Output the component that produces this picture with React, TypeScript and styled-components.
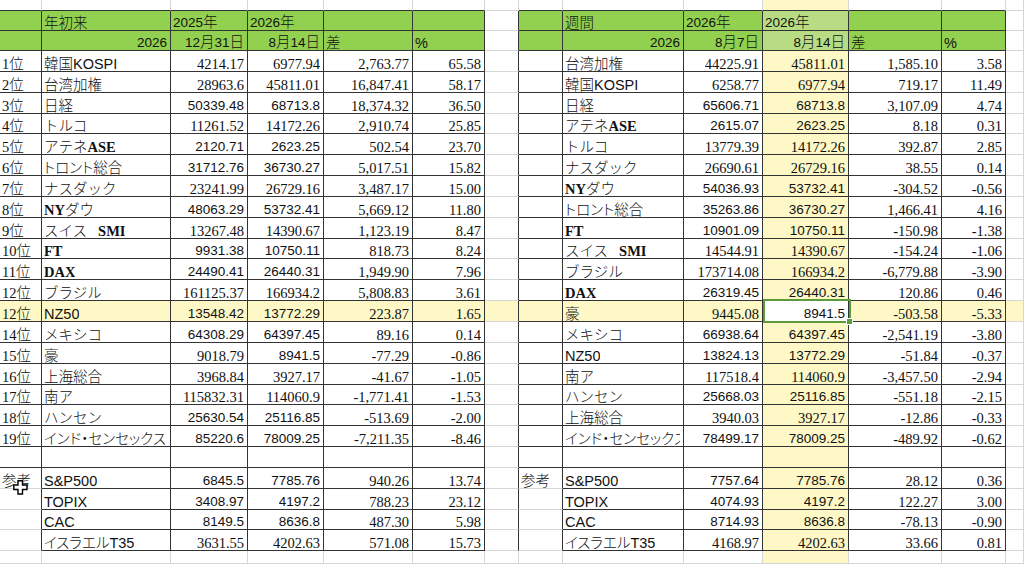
import React from "react";
import styled, { createGlobalStyle } from "styled-components";

const GlobalStyle = createGlobalStyle`
  html, body {
    margin: 0;
    padding: 0;
    background: #fff;
  }
  body {
    overflow: hidden;
  }
`;

const SANS = `"Liberation Sans", "Noto Sans CJK JP", sans-serif`;
const SERIF = `"Liberation Serif", "Noto Sans CJK JP", serif`;

const GREEN = "#92d050";
const GREEN_LIT = "#b8dc84";
const YELLOW = "#fdf8c6";
const GRID = "#d6d6d6";
const LINE = "#333";
const SELECT = "#5b9b3b";

const COLS = 14;
const HIGHLIGHT = 12;

type Kind = "top" | "h1" | "h2" | "data" | "blank" | "ref" | "bottom";
type Align = "left" | "right";
type Spec = { node: React.ReactNode; align?: Align } | null;
type Font = "r" | "s";

const Sheet = styled.div`
  display: grid;
  grid-template-columns: 42px 129px 77px 76px 89px 72px 34px 44px 121px 79px 86px 93px 64px 1fr;
  grid-template-rows: 11px 20px 20px repeat(24, 20.85px) 1fr;
  width: 1024px;
  height: 564px;
  overflow: hidden;
  color: #111;
`;

const Cell = styled.div<{ $bg: string; $right: string; $bottom: string; $align: Align }>`
  position: relative;
  display: flex;
  align-items: flex-end;
  justify-content: ${(p) => (p.$align === "right" ? "flex-end" : "flex-start")};
  min-width: 0;
  padding: 0 3px 0 2px;
  background: ${(p) => p.$bg};
  border-right: 1px solid ${(p) => p.$right};
  border-bottom: 1px solid ${(p) => p.$bottom};
  font-family: ${SANS};
  font-size: 14.5px;
  font-weight: 300;
  line-height: 14px;
`;

const Content = styled.span`
  min-width: 0;
  white-space: nowrap;
  overflow-x: clip;
`;

const Tight = styled.span`
  font-feature-settings: "palt";
`;

const Latin = styled.span<{ $gap?: boolean }>`
  font-family: ${SERIF};
  font-weight: 700;
  font-size: 14.5px;
  margin-left: ${(p) => (p.$gap ? "11px" : "0")};
`;

const Digit = styled.span`
  font-family: ${SERIF};
  font-weight: 400;
  font-size: 14.5px;
`;

const Figure = styled.span<{ $sans?: boolean }>`
  font-family: ${(p) => (p.$sans ? SANS : SERIF)};
  font-weight: 400;
  font-size: ${(p) => (p.$sans ? "13.5px" : "14.5px")};
`;

const HeadNum = styled.span`
  font-size: 13.5px;
`;

const Selection = styled.div`
  position: absolute;
  left: 0;
  top: -2px;
  right: -3px;
  bottom: -2px;
  border: 2px solid ${SELECT};
  z-index: 3;
  pointer-events: none;
`;

const Handle = styled.div`
  position: absolute;
  right: -4px;
  bottom: -4px;
  width: 5px;
  height: 5px;
  background: ${SELECT};
  border: 1px solid #fff;
`;

const Pointer = styled.svg`
  position: absolute;
  left: 13px;
  top: 12px;
  z-index: 4;
`;

const inTable = (c: number) => c <= 5 || (c >= 7 && c <= 12);

const rightLine = (kind: Kind, c: number) => {
  if (kind === "top" || kind === "bottom") return GRID;
  return c <= 12 ? LINE : GRID;
};

const bottomLine = (kind: Kind, c: number) => {
  if (kind === "bottom") return GRID;
  if (kind === "ref" && (c === 0 || c === 7)) return GRID;
  return inTable(c) ? LINE : GRID;
};

const background = (kind: Kind, c: number, index?: number) => {
  if (kind === "h1" || kind === "h2") {
    if (c === 10) return GREEN_LIT;
    return inTable(c) ? GREEN : "#fff";
  }
  if (kind === "data" && index === HIGHLIGHT) return c === 10 ? "#fff" : YELLOW;
  return c === 10 ? YELLOW : "#fff";
};

const Rank = ({ n }: { n: number | string }) => (
  <>
    <Digit>{n}</Digit>位
  </>
);

const Year = ({ y }: { y: string }) => (
  <>
    <HeadNum>{y}</HeadNum>年
  </>
);

const Day = ({ m, d }: { m: string; d: string }) => (
  <>
    <HeadNum>{m}</HeadNum>月<HeadNum>{d}</HeadNum>日
  </>
);

const names: Record<string, React.ReactNode> = {
  kospi: "韓国KOSPI",
  taiwan: "台湾加権",
  nikkei: "日経",
  turkey: "トルコ",
  athens: (
    <>
      アテネ<Latin>ASE</Latin>
    </>
  ),
  toronto: <Tight>トロント総合</Tight>,
  nasdaq: "ナスダック",
  dow: (
    <>
      <Latin>NY</Latin>ダウ
    </>
  ),
  swiss: (
    <>
      スイス<Latin $gap>SMI</Latin>
    </>
  ),
  ft: <Latin>FT</Latin>,
  dax: <Latin>DAX</Latin>,
  brazil: "ブラジル",
  nz: "NZ50",
  mexico: "メキシコ",
  aus: "豪",
  shanghai: "上海総合",
  sa: "南ア",
  hangseng: "ハンセン",
  india: <Tight>インド・センセックス</Tight>,
  sp: "S&P500",
  topix: "TOPIX",
  cac: "CAC",
  israel: <Tight>イスラエルT35</Tight>,
};

type Quote = [name: string, from: string, to: string, diff: string, pct: string, fonts: string];

const ytd: Quote[] = [
  ["kospi", "4214.17", "6977.94", "2,763.77", "65.58", "rr"],
  ["taiwan", "28963.6", "45811.01", "16,847.41", "58.17", "rr"],
  ["nikkei", "50339.48", "68713.8", "18,374.32", "36.50", "ss"],
  ["turkey", "11261.52", "14172.26", "2,910.74", "25.85", "rr"],
  ["athens", "2120.71", "2623.25", "502.54", "23.70", "ss"],
  ["toronto", "31712.76", "36730.27", "5,017.51", "15.82", "ss"],
  ["nasdaq", "23241.99", "26729.16", "3,487.17", "15.00", "rr"],
  ["dow", "48063.29", "53732.41", "5,669.12", "11.80", "ss"],
  ["swiss", "13267.48", "14390.67", "1,123.19", "8.47", "rr"],
  ["ft", "9931.38", "10750.11", "818.73", "8.24", "ss"],
  ["dax", "24490.41", "26440.31", "1,949.90", "7.96", "ss"],
  ["brazil", "161125.37", "166934.2", "5,808.83", "3.61", "rr"],
  ["nz", "13548.42", "13772.29", "223.87", "1.65", "ss"],
  ["mexico", "64308.29", "64397.45", "89.16", "0.14", "ss"],
  ["aus", "9018.79", "8941.5", "-77.29", "-0.86", "rs"],
  ["shanghai", "3968.84", "3927.17", "-41.67", "-1.05", "rr"],
  ["sa", "115832.31", "114060.9", "-1,771.41", "-1.53", "rr"],
  ["hangseng", "25630.54", "25116.85", "-513.69", "-2.00", "ss"],
  ["india", "85220.6", "78009.25", "-7,211.35", "-8.46", "ss"],
];

const ytdRef: Quote[] = [
  ["sp", "6845.5", "7785.76", "940.26", "13.74", "ss"],
  ["topix", "3408.97", "4197.2", "788.23", "23.12", "ss"],
  ["cac", "8149.5", "8636.8", "487.30", "5.98", "ss"],
  ["israel", "3631.55", "4202.63", "571.08", "15.73", "rr"],
];

const weekly: Quote[] = [
  ["taiwan", "44225.91", "45811.01", "1,585.10", "3.58", "rr"],
  ["kospi", "6258.77", "6977.94", "719.17", "11.49", "rr"],
  ["nikkei", "65606.71", "68713.8", "3,107.09", "4.74", "ss"],
  ["athens", "2615.07", "2623.25", "8.18", "0.31", "ss"],
  ["turkey", "13779.39", "14172.26", "392.87", "2.85", "rr"],
  ["nasdaq", "26690.61", "26729.16", "38.55", "0.14", "rr"],
  ["dow", "54036.93", "53732.41", "-304.52", "-0.56", "ss"],
  ["toronto", "35263.86", "36730.27", "1,466.41", "4.16", "ss"],
  ["ft", "10901.09", "10750.11", "-150.98", "-1.38", "ss"],
  ["swiss", "14544.91", "14390.67", "-154.24", "-1.06", "rr"],
  ["brazil", "173714.08", "166934.2", "-6,779.88", "-3.90", "rr"],
  ["dax", "26319.45", "26440.31", "120.86", "0.46", "ss"],
  ["aus", "9445.08", "8941.5", "-503.58", "-5.33", "rs"],
  ["mexico", "66938.64", "64397.45", "-2,541.19", "-3.80", "ss"],
  ["nz", "13824.13", "13772.29", "-51.84", "-0.37", "ss"],
  ["sa", "117518.4", "114060.9", "-3,457.50", "-2.94", "rr"],
  ["hangseng", "25668.03", "25116.85", "-551.18", "-2.15", "ss"],
  ["shanghai", "3940.03", "3927.17", "-12.86", "-0.33", "rr"],
  ["india", "78499.17", "78009.25", "-489.92", "-0.62", "ss"],
];

const weeklyRef: Quote[] = [
  ["sp", "7757.64", "7785.76", "28.12", "0.36", "ss"],
  ["topix", "4074.93", "4197.2", "122.27", "3.00", "ss"],
  ["cac", "8714.93", "8636.8", "-78.13", "-0.90", "ss"],
  ["israel", "4168.97", "4202.63", "33.66", "0.81", "rr"],
];

const left = (node: React.ReactNode): Spec => ({ node, align: "left" });
const right = (node: React.ReactNode): Spec => ({ node, align: "right" });
const num = (v: string, f: Font = "r") => right(<Figure $sans={f === "s"}>{v}</Figure>);

const quoteCells = ([key, from, to, diff, pct, fonts]: Quote): Spec[] => [
  left(names[key]),
  num(from, fonts[0] as Font),
  num(to, fonts[1] as Font),
  num(diff),
  num(pct),
];

const CellCursor = () => (
  <Pointer width="15" height="15" viewBox="0 0 15 15">
    <polygon
      points="5,0.8 9.5,0.8 9.5,5 14,5 14,9.5 9.5,9.5 9.5,14 5,14 5,9.5 0.8,9.5 0.8,5 5,5"
      fill="#fff"
      stroke="#000"
      strokeWidth="1.4"
      strokeLinejoin="miter"
    />
  </Pointer>
);

function SheetRow({ kind, index, cells }: { kind: Kind; index?: number; cells: Spec[] }) {
  return (
    <>
      {Array.from({ length: COLS }, (_, c) => {
        const spec = cells[c];
        const selected = kind === "data" && index === HIGHLIGHT && c === 10;
        return (
          <Cell
            key={c}
            $bg={background(kind, c, index)}
            $right={rightLine(kind, c)}
            $bottom={bottomLine(kind, c)}
            $align={spec?.align ?? "left"}
          >
            {spec && <Content>{spec.node}</Content>}
            {selected && (
              <Selection>
                <Handle />
              </Selection>
            )}
          </Cell>
        );
      })}
    </>
  );
}

const empty: Spec[] = [];

export default function App() {
  const head1: Spec[] = [
    null,
    left("年初来"),
    left(<Year y="2025" />),
    left(<Year y="2026" />),
    null,
    null,
    null,
    null,
    left("週間"),
    left(<Year y="2026" />),
    left(<Year y="2026" />),
  ];
  const head2: Spec[] = [
    null,
    right(<HeadNum>2026</HeadNum>),
    right(<Day m="12" d="31" />),
    right(<Day m="8" d="14" />),
    left("差"),
    left("%"),
    null,
    null,
    right(<HeadNum>2026</HeadNum>),
    right(<Day m="8" d="7" />),
    right(<Day m="8" d="14" />),
    left("差"),
    left("%"),
  ];

  return (
    <>
      <GlobalStyle />
      <Sheet>
        <SheetRow kind="top" cells={empty} />
        <SheetRow kind="h1" cells={head1} />
        <SheetRow kind="h2" cells={head2} />
        {ytd.map((q, i) => (
          <SheetRow
            key={`d${i}`}
            kind="data"
            index={i}
            cells={[
              left(<Rank n={i === HIGHLIGHT ? 12 : i + 1} />),
              ...quoteCells(q),
              null,
              null,
              ...quoteCells(weekly[i]),
            ]}
          />
        ))}
        <SheetRow kind="blank" cells={empty} />
        {ytdRef.map((q, i) => (
          <SheetRow
            key={`r${i}`}
            kind="ref"
            index={i}
            cells={[
              i === 0
                ? {
                    node: (
                      <>
                        参考
                        <CellCursor />
                      </>
                    ),
                  }
                : null,
              ...quoteCells(q),
              null,
              i === 0 ? left("参考") : null,
              ...quoteCells(weeklyRef[i]),
            ]}
          />
        ))}
        <SheetRow kind="bottom" cells={empty} />
      </Sheet>
    </>
  );
}
